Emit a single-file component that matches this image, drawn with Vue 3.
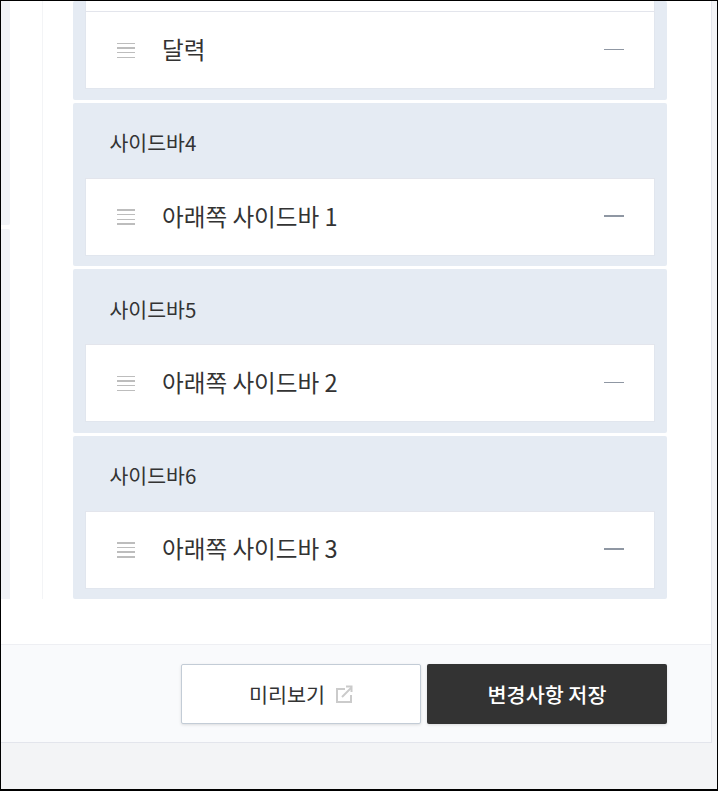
<template>
  <div class="frame">
    <div class="panel">
      <div class="content">
        <div class="side-strip">
          <div class="strip-part strip-top"></div>
          <div class="strip-part strip-bottom"></div>
        </div>
        <div class="tree-line"></div>
        <div class="widgets">
          <section class="widget widget-partial">
            <div class="stub"></div>
            <div class="row">
              <span class="handle"><i></i><i></i><i></i><i></i></span>
              <span class="row-label">달력</span>
              <span class="minus"></span>
            </div>
          </section>
          <section v-for="w in widgets" :key="w.title" class="widget">
            <h3 class="widget-title">{{ w.title }}</h3>
            <div class="row">
              <span class="handle"><i></i><i></i><i></i><i></i></span>
              <span class="row-label">{{ w.item }}</span>
              <span class="minus"></span>
            </div>
          </section>
        </div>
      </div>
      <div class="spacer"></div>
      <div class="footer">
        <button class="btn btn-light">
          미리보기
          <svg class="ext-icon" width="17" height="18" viewBox="0 0 17 18" fill="none" stroke="#cbcbcb" stroke-width="2">
            <path d="M9 4H1v13h14v-7" />
            <path d="M6 12 15.5 2.5" />
            <path d="M10 1.5h5.5V7" />
          </svg>
        </button>
        <button class="btn btn-dark">변경사항 저장</button>
      </div>
    </div>
  </div>
</template>

<script setup>
const widgets = [
  { title: "사이드바4", item: "아래쪽 사이드바 1" },
  { title: "사이드바5", item: "아래쪽 사이드바 2" },
  { title: "사이드바6", item: "아래쪽 사이드바 3" },
];
</script>

<style>
html,
body {
  margin: 0;
  padding: 0;
}
</style>

<style scoped>
.frame {
  box-sizing: border-box;
  width: 718px;
  height: 791px;
  border: 1px solid #000;
  border-width: 1px 1px 2px 1px;
  background: #f3f4f6;
  font-family: "Noto Sans CJK KR", "Noto Sans", sans-serif;
  color: #333;
  overflow: hidden;
}

.panel {
  box-sizing: border-box;
  width: 711px;
  height: 742px;
  background: #fff;
  border-right: 1px solid #e3e5ec;
  border-bottom: 1px solid #e3e5ec;
  display: flex;
  flex-direction: column;
}

.content {
  height: 598px;
  display: flex;
  overflow: hidden;
}

.side-strip {
  width: 9px;
  display: flex;
  flex-direction: column;
  gap: 4px;
}

.strip-part {
  background: #f1f3f7;
}

.strip-top {
  height: 224px;
  border-bottom-right-radius: 2px;
}

.strip-bottom {
  flex: 1;
  border-top-right-radius: 2px;
}

.tree-line {
  width: 1px;
  margin-left: 32px;
  background: #f3f4f6;
}

.widgets {
  width: 594px;
  margin-left: 30px;
  display: flex;
  flex-direction: column;
  gap: 3px;
}

.widget {
  box-sizing: border-box;
  flex: none;
  height: 163.4px;
  padding: 0 12px;
  background: #e5ebf3;
  border-radius: 2px;
}

.widget-partial {
  height: 99px;
}

.stub {
  box-sizing: border-box;
  height: 10.3px;
  background: #fff;
  border: 1px solid #e1e6ee;
  border-width: 0 1px;
}

.widget-title {
  margin: 0 0 0 -0.5px;
  height: 75px;
  padding: 24.2px 0 0 25px;
  box-sizing: border-box;
  font-size: 20.5px;
  font-weight: 400;
  line-height: 30px;
}

.row {
  box-sizing: border-box;
  height: 78px;
  display: flex;
  align-items: center;
  padding: 0 30px 0 31px;
  background: #fff;
  border: 1px solid #e1e6ee;
  border-top-color: #e3e5ec;
}

.handle {
  width: 18px;
  display: flex;
  flex-direction: column;
  gap: 3.2px;
}

.handle i {
  display: block;
  height: 1.5px;
  background: #bdbdbd;
}

.row-label {
  flex: 1;
  margin: -3px 0 0 27px;
  font-size: 23.6px;
  line-height: 32px;
}

.minus {
  width: 20px;
  height: 1.5px;
  margin-top: -2px;
  background: #8f97a3;
}

.spacer {
  height: 45px;
}

.footer {
  box-sizing: border-box;
  flex: 1;
  display: flex;
  justify-content: flex-end;
  gap: 6px;
  padding: 19px 44px 0 0;
  background: #f9fafc;
  border-top: 1px solid #eeeff3;
}

.btn {
  box-sizing: border-box;
  width: 240px;
  height: 60px;
  display: flex;
  align-items: center;
  justify-content: center;
  font-family: inherit;
  font-size: 20.7px;
  border-radius: 2px;
  box-shadow: 0 1px 3px rgba(0, 0, 0, 0.12);
  cursor: pointer;
}

.btn-light {
  background: #fff;
  border: 1px solid #c3ccd6;
  color: #333;
}

.ext-icon {
  margin-left: 11px;
}

.btn-dark {
  background: #333;
  border: none;
  color: #fff;
  font-weight: 500;
}
</style>
